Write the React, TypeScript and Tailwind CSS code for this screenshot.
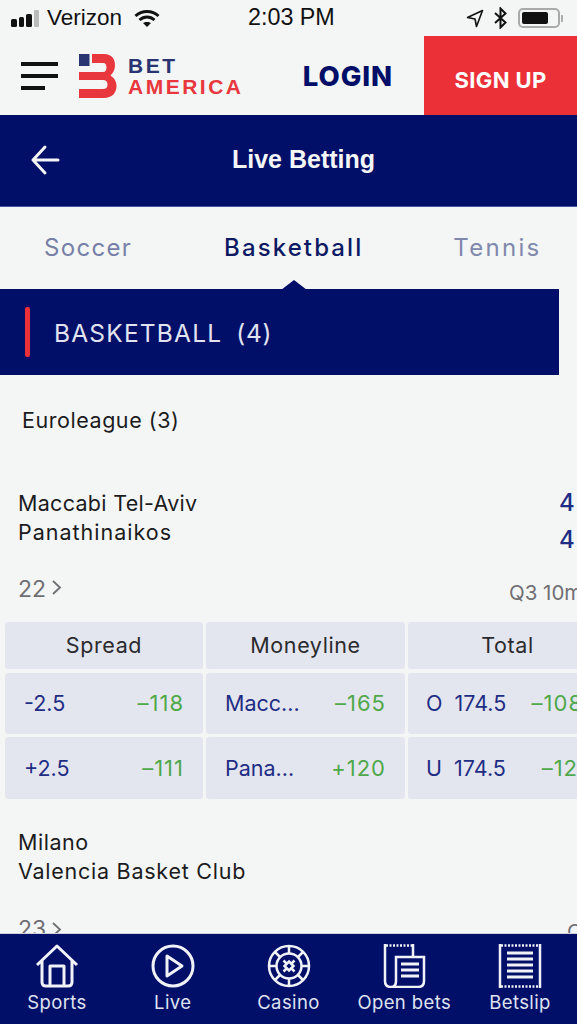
function Cell({ left, right, pad = "px-[19px]" }: { left: string; right: string; pad?: string }) {
  return (
    <div className={"flex items-center justify-between rounded-[3px] bg-[#e4e6ef] text-[21.5px] " + pad}>
      <span className="whitespace-pre text-[#1f2d85]">{left}</span>
      <span className="text-[22px] tracking-[1px] text-[#4fa84a]">{right}</span>
    </div>
  );
}

function Head({ children }: { children: string }) {
  return (
    <div className="flex items-center justify-center rounded-[3px] bg-[#e4e6ef] text-[21.5px] tracking-[0.6px] text-[#2a2a2e]">{children}</div>
  );
}

function BMark() {
  return (
    <svg width="38" height="44" viewBox="0 0 38 44" fill="none">
      <rect x="0" y="0" width="10.5" height="12" fill="#2b3473" />
      <path d="M13 0 H25 C33 0 36 5 36 11 C36 16 34 19 31.5 21.5 C35 24 37.5 27 37.5 32 C37.5 39 33 44 25 44 H0 V35 H24 C27 35 28.5 33.5 28.5 30.5 C28.5 27.5 27 26 24 26 H0 V18 H24 C26.5 18 27.5 16 27.5 13.5 C27.5 11 26.5 9 24 9 H13 Z" fill="#e8373d" />
    </svg>
  );
}

function NavItem({ label, children }: { label: string; children: React.ReactNode }) {
  return (
    <div className="flex w-[114px] flex-col items-center">
      <div className="flex h-[46px] items-center justify-center">{children}</div>
      <span className="mt-[1px] whitespace-nowrap text-[18.5px] leading-[24px] tracking-[0.4px] text-[#dfe2f1]">{label}</span>
    </div>
  );
}

export default function App() {
  return (
    <div
      className="relative flex h-[1024px] w-[577px] flex-col overflow-hidden bg-[#f4f6f6]"
      style={{ fontFamily: 'Inter, "Open Sans", sans-serif' }}
    >
      {/* status bar */}
      <div className="flex h-[36px] shrink-0 items-center pl-[11px] pr-[14px] font-['Liberation_Sans',sans-serif] text-[#111]">
        <div className="flex w-[237px] items-center">
          <div className="flex items-end gap-[2px]">
            <span className="h-[8px] w-[5.5px] rounded-[1.5px] bg-[#111]" />
            <span className="h-[10px] w-[5.5px] rounded-[1.5px] bg-[#111]" />
            <span className="h-[13px] w-[5.5px] rounded-[1.5px] bg-[#111]" />
            <span className="h-[17px] w-[5.5px] rounded-[1px] bg-[#bbb]" />
          </div>
          <span className="ml-[8px] text-[22.5px]">Verizon</span>
          <svg className="ml-[12px]" width="26" height="19" viewBox="0 0 26 19" fill="none" stroke="#111" strokeWidth="3">
            <path d="M1.5 7 C8 1 18 1 24.5 7" />
            <path d="M5.5 11 C10 7 16 7 20.5 11" />
            <path d="M13 18 L9 14 C11 12.5 15 12.5 17 14 Z" fill="#111" stroke="none" />
          </svg>
        </div>
        <span className="text-[23.3px] leading-none">2:03 PM</span>
        <div className="ml-auto flex w-[110px] items-center justify-end">
          <svg width="18" height="19" viewBox="0 0 18 19" fill="none" stroke="#111" strokeWidth="1.6" strokeLinejoin="round">
            <path d="M16.5 1.5 L1.5 8.5 L9 10 L10.5 17.5 Z" />
          </svg>
          <svg className="ml-[10px]" width="13" height="22" viewBox="0 0 13 22" fill="none" stroke="#111" strokeWidth="2">
            <path d="M1 6 L11.5 15.5 L6.5 20.5 V1.5 L11.5 6.5 L1 16" />
          </svg>
          <div className="ml-[11px] flex h-[20px] w-[42px] items-center rounded-[5px] border-2 border-[#aaa] p-[2px]">
            <div className="h-full w-[26px] rounded-[2px] bg-[#111]" />
          </div>
          <span className="ml-[1px] h-[7px] w-[2px] rounded-r-[1px] bg-[#aaa]" />
        </div>
      </div>

      {/* header */}
      <div className="flex h-[79px] shrink-0 items-center">
        <div className="ml-[21px] flex w-[37px] flex-col gap-[8px]">
          <span className="h-[4px] w-[37px] bg-[#111]" />
          <span className="h-[4px] w-[37px] bg-[#111]" />
          <span className="h-[4px] w-[24px] bg-[#111]" />
        </div>
        <div className="ml-[21px] flex items-center">
          <BMark />
          <div className="ml-[11px] mt-[1px] flex flex-col font-['Liberation_Sans',sans-serif] font-bold leading-[21px]">
            <span className="text-[21px] tracking-[2.6px] text-[#2b3473]">BET</span>
            <span className="text-[21px] tracking-[2.5px] text-[#e8373d]">AMERICA</span>
          </div>
        </div>
        <span className="ml-auto mr-[31px] mt-[3px] text-[27.5px] font-extrabold tracking-[0.9px] text-[#020f68]">LOGIN</span>
        <div className="flex h-full w-[153px] items-center justify-center bg-[#ec3037] pt-[10px] text-[22px] font-bold tracking-[0.4px] text-white">SIGN UP</div>
      </div>

      {/* title bar */}
      <div className="flex h-[92px] shrink-0 items-center border-b border-[#4a55a0] bg-[#020f68] pb-[2px]">
        <svg className="ml-[30px]" width="32" height="32" viewBox="0 0 32 32" fill="none" stroke="#f4f6f6" strokeWidth="3" strokeLinecap="round" strokeLinejoin="round">
          <path d="M28 16 H3 M15 3 L3 16 L15 29" />
        </svg>
        <span className="ml-[170px] font-['Liberation_Sans',sans-serif] text-[25px] font-bold text-[#f4f6f6]">Live Betting</span>
      </div>

      {/* tabs */}
      <div className="flex h-[82px] shrink-0 items-center text-[24px]">
        <span className="ml-[44px] tracking-[1.3px] text-[#7780a6]">Soccer</span>
        <span className="ml-[92px] font-medium tracking-[2.1px] text-[#0d1a63]">Basketball</span>
        <span className="ml-[90px] tracking-[2.3px] text-[#8088ac]">Tennis</span>
      </div>

      {/* section */}
      <div className="relative flex h-[86px] w-[559px] shrink-0 items-center bg-[#020f68] pl-[25px]">
        <span className="absolute left-[281px] top-[-9px] h-0 w-0 border-x-[13px] border-b-[10px] border-x-transparent border-b-[#020f68]" />
        <span className="h-[50px] w-[5px] rounded-[2px] bg-[#ec3037]" />
        <span className="ml-[24px] mt-[2px] text-[24.5px] tracking-[1.2px] text-[#e1e3f0]">BASKETBALL</span>
        <span className="ml-[14px] mt-[2px] text-[24.5px] tracking-[0.7px] text-[#e1e3f0]">(4)</span>
      </div>

      {/* list */}
      <div className="flex-1 text-[21.5px] tracking-[0.55px] text-[#1b1b20]">
        <div className="ml-[22px] mt-[31px] leading-[28px]">Euroleague (3)</div>

        <div className="relative ml-[18px] mt-[55px] leading-[29px]">
          <div className="tracking-[0.3px]">Maccabi Tel-Aviv</div>
          <div className="tracking-[1px]">Panathinaikos</div>
          <span className="absolute left-[541px] top-[-1px] text-[24px] font-medium text-[#1f2d85]">4</span>
          <span className="absolute left-[541px] top-[36px] text-[24px] font-medium text-[#1f2d85]">4</span>
        </div>

        <div className="relative ml-[18px] mt-[26px] flex h-[32px] items-center tracking-normal text-[#6f6f73]">
          <span className="text-[23px]">22</span>
          <svg className="ml-[5px] mb-[3px]" width="11" height="17" viewBox="0 0 11 17" fill="none" stroke="#6f6f73" strokeWidth="1.8">
            <path d="M2 2 L9 8.5 L2 15" />
          </svg>
          <span className="absolute left-[491px] top-[5px] whitespace-nowrap text-[20.5px]">Q3 10m</span>
        </div>

        <div className="ml-[5px] mt-[17px] grid w-[602px] grid-cols-[198px_199px_199px] grid-rows-[47px_61px_62px] gap-x-[3px] gap-y-[3.5px] tracking-normal">
          <Head>Spread</Head>
          <Head>Moneyline</Head>
          <Head>Total</Head>
          <Cell left="-2.5" right="–118" />
          <Cell left="Macc..." right="–165" />
          <Cell pad="pl-[18px] pr-[24px]" left="O  174.5" right="–108" />
          <Cell left="+2.5" right="–111" />
          <Cell left="Pana..." right="+120" />
          <Cell pad="pl-[18px] pr-[19px]" left="U  174.5" right="–121" />
        </div>

        <div className="ml-[18px] mt-[29px] leading-[29px]">
          <div>Milano</div>
          <div className="tracking-[0.75px]">Valencia Basket Club</div>
        </div>
        <div className="relative ml-[18px] mt-[26px] flex items-center tracking-normal text-[#6f6f73]">
          <span className="text-[23px]">23</span>
          <svg className="ml-[5px]" width="11" height="17" viewBox="0 0 11 17" fill="none" stroke="#6f6f73" strokeWidth="1.8">
            <path d="M2 2 L9 8.5 L2 15" />
          </svg>
          <span className="absolute left-[549px] top-[5px] whitespace-nowrap text-[20.5px]">Q4</span>
        </div>
      </div>

      {/* bottom nav overlay */}
      <div className="absolute bottom-0 left-0 flex h-[91px] w-[577px] items-start justify-between border-t border-[#cfd2de] bg-[#020f68] pt-[9px]">
        <NavItem label="Sports">
          <svg width="44" height="44" viewBox="0 0 44 44" fill="none" stroke="#f1f2f8" strokeWidth="3" strokeLinejoin="round">
            <path d="M2 21 L22 2 L42 21 M7 17 V38 Q7 42 11 42 H33 Q37 42 37 38 V17 M15 42 V22 H29 V42" />
          </svg>
        </NavItem>
        <NavItem label="Live">
          <svg width="44" height="44" viewBox="0 0 44 44" fill="none" stroke="#f1f2f8" strokeWidth="3" strokeLinejoin="round">
            <circle cx="22" cy="22" r="20" />
            <path d="M16 12 L31 22 L16 32 Z" />
          </svg>
        </NavItem>
        <NavItem label="Casino">
          <svg width="44" height="44" viewBox="0 0 44 44" fill="none" stroke="#f1f2f8" strokeWidth="2.5">
            <circle cx="22" cy="22" r="20" />
            <circle cx="22" cy="22" r="12.5" />
            <path d="M22 2 V9.5 M22 34.5 V42 M2 22 H9.5 M34.5 22 H42 M8 8 L13 13 M31 31 L36 36 M36 8 L31 13 M13 31 L8 36" />
            <path d="M16.5 16.5 L19.5 19.5 M27.5 16.5 L24.5 19.5 M16.5 27.5 L19.5 24.5 M27.5 27.5 L24.5 24.5" strokeWidth="2.5" />
            <path d="M22 17.5 L26.5 22 L22 26.5 L17.5 22 Z" strokeWidth="2.5" />
          </svg>
        </NavItem>
        <NavItem label="Open bets">
          <svg width="44" height="44" viewBox="0 0 44 44" fill="none" stroke="#f1f2f8" strokeWidth="2.5">
            <path d="M3 0 V37 Q3 43 9 43 H36 Q42 43 42 37 V13 H14 V37 Q14 43 9 43" />
            <path d="M4 1.5 H31" strokeDasharray="2 1.5" />
            <path d="M31 0 V13" />
            <path d="M19 20 H37 M19 26 H37 M19 32 H37" strokeWidth="3" />
          </svg>
        </NavItem>
        <NavItem label="Betslip">
          <svg width="44" height="44" viewBox="0 0 44 44" fill="none" stroke="#f1f2f8" strokeWidth="2.5">
            <path d="M2 0 V44 M42 0 V44" />
            <path d="M3 1.5 H41 M3 42.5 H41" strokeDasharray="2 1.5" />
            <path d="M9 9 H35 M9 15 H35 M9 21 H35 M9 27 H35 M9 33 H35" strokeWidth="3" />
          </svg>
        </NavItem>
      </div>
    </div>
  );
}
